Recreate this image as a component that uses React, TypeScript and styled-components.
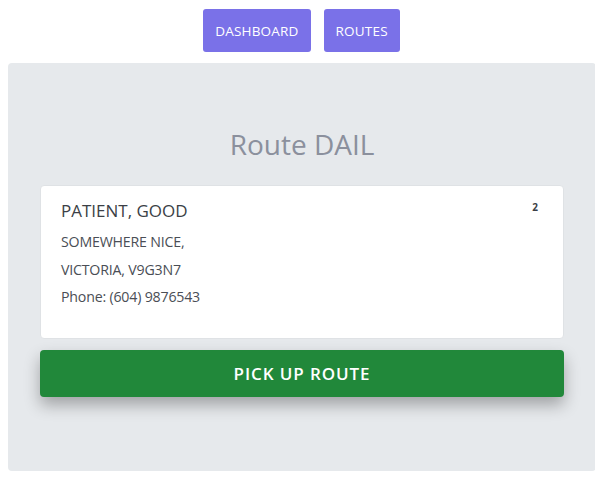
import React from "react";
import styled, { createGlobalStyle } from "styled-components";

const GlobalStyle = createGlobalStyle`
  body {
    margin: 8px;
    background: #ffffff;
    font-family: "Open Sans", "Noto Sans", sans-serif;
  }
`;

const Nav = styled.nav`
  display: flex;
  justify-content: center;
  gap: 13px;
  padding-top: 1px;
  margin-bottom: 11px;
`;

const NavButton = styled.button`
  height: 43px;
  padding: 0 12px;
  border: none;
  border-radius: 3px;
  background: #7a71e8;
  color: #ffffff;
  font-family: inherit;
  font-size: 13.5px;
  letter-spacing: 0.2px;
  cursor: pointer;
`;

const Panel = styled.main`
  background: #e6e9ec;
  border-radius: 4px;
  padding: 61px 32px 74px;
  margin-right: -1px;
  height: 408px;
  box-sizing: border-box;
`;

const Title = styled.h1`
  margin: 0 0 21px;
  text-align: center;
  font-size: 28px;
  font-weight: 400;
  line-height: 40px;
  color: #8b909d;
`;

const Card = styled.section`
  position: relative;
  background: #ffffff;
  border: 1px solid #dfe2e5;
  border-radius: 4px;
  height: 154px;
  box-sizing: border-box;
  padding: 12px 20px;
`;

const Name = styled.h2`
  margin: 0 0 5px;
  font-size: 17px;
  font-weight: 400;
  line-height: 25px;
  color: #3b3f46;
`;

const Line = styled.p`
  margin: 0;
  font-size: 14.2px;
  line-height: 27.5px;
  color: #4a4e55;
  letter-spacing: -0.2px;
`;

const Badge = styled.span`
  position: absolute;
  top: 14px;
  right: 25px;
  font-size: 10px;
  font-weight: 700;
  color: #3b3f46;
`;

const PickUpButton = styled.button`
  display: block;
  width: 100%;
  height: 47px;
  margin-top: 11px;
  border: none;
  border-radius: 4px;
  background: #21883a;
  color: #ffffff;
  font-family: inherit;
  font-size: 17px;
  font-weight: 600;
  letter-spacing: 0.9px;
  box-shadow: 0 8px 16px rgba(0, 0, 0, 0.3);
  cursor: pointer;
`;

export default function App() {
  return (
    <>
      <GlobalStyle />
      <Nav>
        <NavButton>DASHBOARD</NavButton>
        <NavButton>ROUTES</NavButton>
      </Nav>
      <Panel>
        <Title>Route DAIL</Title>
        <Card>
          <Name>PATIENT, GOOD</Name>
          <Line>SOMEWHERE NICE,</Line>
          <Line>VICTORIA, V9G3N7</Line>
          <Line>Phone: (604) 9876543</Line>
          <Badge>2</Badge>
        </Card>
        <PickUpButton>PICK UP ROUTE</PickUpButton>
      </Panel>
    </>
  );
}
